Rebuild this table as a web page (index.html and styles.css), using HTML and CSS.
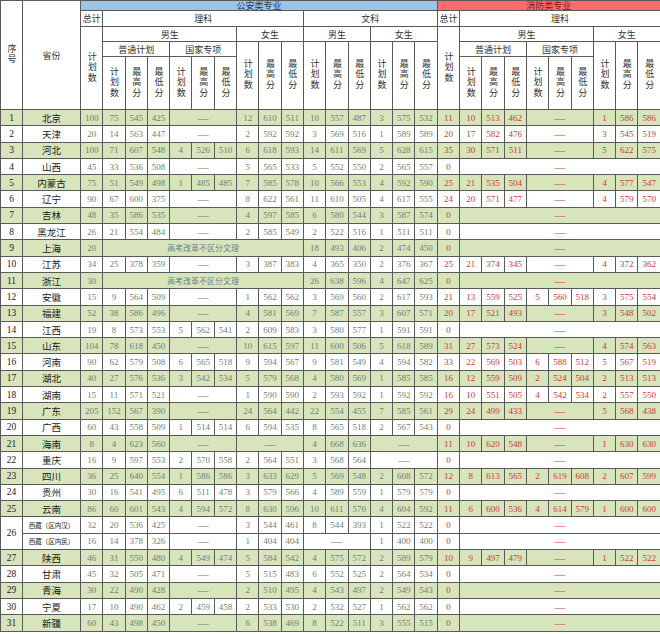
FILE: index.html
```html
<!DOCTYPE html>
<html lang="zh">
<head>
<meta charset="utf-8">
<title>招生计划</title>
<link rel="stylesheet" href="styles.css">
</head>
<body>
<table class="t">
<colgroup>
<col class="c-i"><col class="c-p">
<col class="c"><col class="c"><col class="c"><col class="c"><col class="c"><col class="c"><col class="c"><col class="c"><col class="c"><col class="c"><col class="c"><col class="c"><col class="c"><col class="c"><col class="c"><col class="c">
<col class="c"><col class="c"><col class="c"><col class="c"><col class="c"><col class="c"><col class="c"><col class="c"><col class="c"><col class="c">
</colgroup>
<thead>
<tr class="h1"><th rowspan="5"><span class="vt">序号</span></th><th rowspan="5">省份</th><th colspan="16" class="blue">公安类专业</th><th colspan="10" class="red">消防类专业</th></tr>
<tr class="h2"><th>总计</th><th colspan="9">理科</th><th colspan="6">文科</th><th>总计</th><th colspan="9">理科</th></tr>
<tr class="h3"><th rowspan="3"><span class="vt">计划数</span></th><th colspan="6">男生</th><th colspan="3">女生</th><th colspan="3">男生</th><th colspan="3">女生</th><th rowspan="3"><span class="vt">计划数</span></th><th colspan="6">男生</th><th colspan="3">女生</th></tr>
<tr class="h4"><th colspan="3">普通计划</th><th colspan="3">国家专项</th><th rowspan="2"><span class="vt">计划数</span></th><th rowspan="2"><span class="vt">最高分</span></th><th rowspan="2"><span class="vt">最低分</span></th><th rowspan="2"><span class="vt">计划数</span></th><th rowspan="2"><span class="vt">最高分</span></th><th rowspan="2"><span class="vt">最低分</span></th><th rowspan="2"><span class="vt">计划数</span></th><th rowspan="2"><span class="vt">最高分</span></th><th rowspan="2"><span class="vt">最低分</span></th><th colspan="3">普通计划</th><th colspan="3">国家专项</th><th rowspan="2"><span class="vt">计划数</span></th><th rowspan="2"><span class="vt">最高分</span></th><th rowspan="2"><span class="vt">最低分</span></th></tr>
<tr class="h5"><th><span class="vt">计划数</span></th><th><span class="vt">最高分</span></th><th><span class="vt">最低分</span></th><th><span class="vt">计划数</span></th><th><span class="vt">最高分</span></th><th><span class="vt">最低分</span></th><th><span class="vt">计划数</span></th><th><span class="vt">最高分</span></th><th><span class="vt">最低分</span></th><th><span class="vt">计划数</span></th><th><span class="vt">最高分</span></th><th><span class="vt">最低分</span></th></tr>
</thead>
<tbody>
<tr class="g"><td class="i">1</td><td class="p">北京</td><td>100</td><td>75</td><td>545</td><td>425</td><td colspan="3" class="d">——</td><td>12</td><td>610</td><td>511</td><td>10</td><td>557</td><td>487</td><td>3</td><td>575</td><td>532</td><td class="r">11</td><td class="r">10</td><td class="r">513</td><td class="r">462</td><td colspan="3" class="r d">——</td><td class="r">1</td><td class="r">586</td><td class="r">586</td></tr>
<tr><td class="i">2</td><td class="p">天津</td><td>20</td><td>14</td><td>563</td><td>447</td><td colspan="3" class="d">——</td><td>2</td><td>592</td><td>592</td><td>3</td><td>569</td><td>516</td><td>1</td><td>589</td><td>589</td><td class="r">20</td><td class="r">17</td><td class="r">582</td><td class="r">476</td><td colspan="3" class="r d">——</td><td class="r">3</td><td class="r">545</td><td class="r">519</td></tr>
<tr class="g"><td class="i">3</td><td class="p">河北</td><td>100</td><td>71</td><td>607</td><td>548</td><td>4</td><td>526</td><td>510</td><td>6</td><td>618</td><td>593</td><td>14</td><td>611</td><td>569</td><td>5</td><td>628</td><td>615</td><td class="r">35</td><td class="r">30</td><td class="r">571</td><td class="r">511</td><td colspan="3" class="r d">——</td><td class="r">5</td><td class="r">622</td><td class="r">575</td></tr>
<tr><td class="i">4</td><td class="p">山西</td><td>45</td><td>33</td><td>536</td><td>508</td><td colspan="3" class="d">——</td><td>5</td><td>565</td><td>533</td><td>5</td><td>552</td><td>550</td><td>2</td><td>565</td><td>557</td><td class="r">0</td><td colspan="9" class="r d">——</td></tr>
<tr class="g"><td class="i">5</td><td class="p">内蒙古</td><td>75</td><td>51</td><td>549</td><td>498</td><td>1</td><td>485</td><td>485</td><td>7</td><td>585</td><td>578</td><td>10</td><td>566</td><td>553</td><td>4</td><td>592</td><td>590</td><td class="r">25</td><td class="r">21</td><td class="r">535</td><td class="r">504</td><td colspan="3" class="r d">——</td><td class="r">4</td><td class="r">577</td><td class="r">547</td></tr>
<tr><td class="i">6</td><td class="p">辽宁</td><td>90</td><td>67</td><td>600</td><td>375</td><td colspan="3" class="d">——</td><td>8</td><td>622</td><td>561</td><td>11</td><td>610</td><td>505</td><td>4</td><td>617</td><td>555</td><td class="r">24</td><td class="r">20</td><td class="r">571</td><td class="r">477</td><td colspan="3" class="r d">——</td><td class="r">4</td><td class="r">579</td><td class="r">570</td></tr>
<tr class="g"><td class="i">7</td><td class="p">吉林</td><td>48</td><td>35</td><td>586</td><td>535</td><td colspan="3" class="d">——</td><td>4</td><td>597</td><td>585</td><td>6</td><td>580</td><td>544</td><td>3</td><td>587</td><td>574</td><td class="r">0</td><td colspan="9" class="r d">——</td></tr>
<tr><td class="i">8</td><td class="p">黑龙江</td><td>26</td><td>21</td><td>554</td><td>484</td><td colspan="3" class="d">——</td><td>2</td><td>585</td><td>549</td><td>2</td><td>522</td><td>516</td><td>1</td><td>511</td><td>511</td><td class="r">0</td><td colspan="9" class="r d">——</td></tr>
<tr class="g"><td class="i">9</td><td class="p">上海</td><td>20</td><td colspan="9" class="note">高考改革不区分文理</td><td>18</td><td>493</td><td>406</td><td>2</td><td>474</td><td>450</td><td class="r">0</td><td colspan="9" class="r d">——</td></tr>
<tr><td class="i">10</td><td class="p">江苏</td><td>34</td><td>25</td><td>378</td><td>359</td><td colspan="3" class="d">——</td><td>3</td><td>387</td><td>383</td><td>4</td><td>365</td><td>350</td><td>2</td><td>376</td><td>367</td><td class="r">25</td><td class="r">21</td><td class="r">374</td><td class="r">345</td><td colspan="3" class="r d">——</td><td class="r">4</td><td class="r">372</td><td class="r">362</td></tr>
<tr class="g"><td class="i">11</td><td class="p">浙江</td><td>30</td><td colspan="9" class="note">高考改革不区分文理</td><td>26</td><td>638</td><td>596</td><td>4</td><td>647</td><td>625</td><td class="r">0</td><td colspan="9" class="r d">——</td></tr>
<tr><td class="i">12</td><td class="p">安徽</td><td>15</td><td>9</td><td>564</td><td>509</td><td colspan="3" class="d">——</td><td>1</td><td>562</td><td>562</td><td>3</td><td>569</td><td>560</td><td>2</td><td>617</td><td>593</td><td class="r">21</td><td class="r">13</td><td class="r">559</td><td class="r">525</td><td class="r">5</td><td class="r">560</td><td class="r">518</td><td class="r">3</td><td class="r">575</td><td class="r">554</td></tr>
<tr class="g"><td class="i">13</td><td class="p">福建</td><td>52</td><td>38</td><td>586</td><td>496</td><td colspan="3" class="d">——</td><td>4</td><td>581</td><td>569</td><td>7</td><td>587</td><td>557</td><td>3</td><td>607</td><td>571</td><td class="r">20</td><td class="r">17</td><td class="r">521</td><td class="r">493</td><td colspan="3" class="r d">——</td><td class="r">3</td><td class="r">548</td><td class="r">502</td></tr>
<tr><td class="i">14</td><td class="p">江西</td><td>19</td><td>8</td><td>573</td><td>553</td><td>5</td><td>562</td><td>541</td><td>2</td><td>609</td><td>583</td><td>3</td><td>580</td><td>577</td><td>1</td><td>591</td><td>591</td><td class="r">0</td><td colspan="9" class="r d">——</td></tr>
<tr class="g"><td class="i">15</td><td class="p">山东</td><td>104</td><td>78</td><td>618</td><td>450</td><td colspan="3" class="d">——</td><td>10</td><td>615</td><td>597</td><td>11</td><td>600</td><td>506</td><td>5</td><td>618</td><td>589</td><td class="r">31</td><td class="r">27</td><td class="r">573</td><td class="r">524</td><td colspan="3" class="r d">——</td><td class="r">4</td><td class="r">574</td><td class="r">563</td></tr>
<tr><td class="i">16</td><td class="p">河南</td><td>90</td><td>62</td><td>579</td><td>508</td><td>6</td><td>565</td><td>518</td><td>9</td><td>594</td><td>567</td><td>9</td><td>581</td><td>549</td><td>4</td><td>594</td><td>582</td><td class="r">33</td><td class="r">22</td><td class="r">569</td><td class="r">503</td><td class="r">6</td><td class="r">588</td><td class="r">512</td><td class="r">5</td><td class="r">567</td><td class="r">519</td></tr>
<tr class="g"><td class="i">17</td><td class="p">湖北</td><td>40</td><td>27</td><td>576</td><td>536</td><td>3</td><td>542</td><td>534</td><td>5</td><td>579</td><td>568</td><td>4</td><td>580</td><td>569</td><td>1</td><td>585</td><td>585</td><td class="r">16</td><td class="r">12</td><td class="r">559</td><td class="r">509</td><td class="r">2</td><td class="r">524</td><td class="r">504</td><td class="r">2</td><td class="r">513</td><td class="r">513</td></tr>
<tr><td class="i">18</td><td class="p">湖南</td><td>15</td><td>11</td><td>571</td><td>521</td><td colspan="3" class="d">——</td><td>1</td><td>590</td><td>590</td><td>2</td><td>593</td><td>592</td><td>1</td><td>592</td><td>592</td><td class="r">16</td><td class="r">10</td><td class="r">551</td><td class="r">505</td><td class="r">4</td><td class="r">542</td><td class="r">534</td><td class="r">2</td><td class="r">557</td><td class="r">550</td></tr>
<tr class="g"><td class="i">19</td><td class="p">广东</td><td>205</td><td>152</td><td>567</td><td>390</td><td colspan="3" class="d">——</td><td>24</td><td>564</td><td>442</td><td>22</td><td>554</td><td>455</td><td>7</td><td>585</td><td>561</td><td class="r">29</td><td class="r">24</td><td class="r">499</td><td class="r">433</td><td colspan="3" class="r d">——</td><td class="r">5</td><td class="r">568</td><td class="r">438</td></tr>
<tr><td class="i">20</td><td class="p">广西</td><td>60</td><td>43</td><td>558</td><td>509</td><td>1</td><td>514</td><td>514</td><td>6</td><td>594</td><td>535</td><td>8</td><td>565</td><td>518</td><td>2</td><td>567</td><td>543</td><td class="r">0</td><td colspan="9" class="r d">——</td></tr>
<tr class="g"><td class="i">21</td><td class="p">海南</td><td>8</td><td>4</td><td>623</td><td>560</td><td colspan="3" class="d">——</td><td colspan="3" class="d">——</td><td>4</td><td>668</td><td>636</td><td colspan="3" class="d">——</td><td class="r">11</td><td class="r">10</td><td class="r">620</td><td class="r">548</td><td colspan="3" class="r d">——</td><td class="r">1</td><td class="r">630</td><td class="r">630</td></tr>
<tr><td class="i">22</td><td class="p">重庆</td><td>16</td><td>9</td><td>597</td><td>553</td><td>2</td><td>570</td><td>558</td><td>2</td><td>564</td><td>551</td><td>3</td><td>568</td><td>564</td><td colspan="3" class="d">——</td><td class="r">0</td><td colspan="9" class="r d">——</td></tr>
<tr class="g"><td class="i">23</td><td class="p">四川</td><td>36</td><td>25</td><td>640</td><td>554</td><td>1</td><td>586</td><td>586</td><td>3</td><td>633</td><td>629</td><td>5</td><td>569</td><td>548</td><td>2</td><td>608</td><td>572</td><td class="r">12</td><td class="r">8</td><td class="r">613</td><td class="r">565</td><td class="r">2</td><td class="r">619</td><td class="r">608</td><td class="r">2</td><td class="r">607</td><td class="r">599</td></tr>
<tr><td class="i">24</td><td class="p">贵州</td><td>30</td><td>16</td><td>541</td><td>495</td><td>6</td><td>511</td><td>478</td><td>3</td><td>579</td><td>566</td><td>4</td><td>589</td><td>559</td><td>1</td><td>579</td><td>579</td><td class="r">0</td><td colspan="9" class="r d">——</td></tr>
<tr class="g"><td class="i">25</td><td class="p">云南</td><td>86</td><td>60</td><td>601</td><td>543</td><td>4</td><td>594</td><td>572</td><td>8</td><td>630</td><td>596</td><td>10</td><td>611</td><td>570</td><td>4</td><td>604</td><td>592</td><td class="r">11</td><td class="r">6</td><td class="r">600</td><td class="r">536</td><td class="r">4</td><td class="r">614</td><td class="r">579</td><td class="r">1</td><td class="r">600</td><td class="r">600</td></tr>
<tr><td class="i" rowspan="2">26</td><td class="p s">西藏（区内汉）</td><td>32</td><td>20</td><td>536</td><td>425</td><td colspan="3" class="d">——</td><td>3</td><td>544</td><td>461</td><td>8</td><td>544</td><td>393</td><td>1</td><td>522</td><td>522</td><td class="r">0</td><td colspan="9" class="r d">——</td></tr>
<tr><td class="p s">西藏（区内民）</td><td>16</td><td>14</td><td>378</td><td>326</td><td colspan="3" class="d">——</td><td>1</td><td>404</td><td>404</td><td colspan="3" class="d">——</td><td>1</td><td>400</td><td>400</td><td class="r">0</td><td colspan="9" class="r d">——</td></tr>
<tr class="g"><td class="i">27</td><td class="p">陕西</td><td>46</td><td>31</td><td>550</td><td>480</td><td>4</td><td>549</td><td>474</td><td>5</td><td>584</td><td>542</td><td>4</td><td>575</td><td>572</td><td>2</td><td>589</td><td>579</td><td class="r">10</td><td class="r">9</td><td class="r">497</td><td class="r">479</td><td colspan="3" class="r d">——</td><td class="r">1</td><td class="r">522</td><td class="r">522</td></tr>
<tr><td class="i">28</td><td class="p">甘肃</td><td>45</td><td>32</td><td>505</td><td>471</td><td colspan="3" class="d">——</td><td>5</td><td>515</td><td>483</td><td>6</td><td>552</td><td>525</td><td>2</td><td>564</td><td>534</td><td class="r">0</td><td colspan="9" class="r d">——</td></tr>
<tr class="g"><td class="i">29</td><td class="p">青海</td><td>30</td><td>22</td><td>490</td><td>428</td><td colspan="3" class="d">——</td><td>2</td><td>510</td><td>495</td><td>4</td><td>543</td><td>497</td><td>2</td><td>549</td><td>543</td><td class="r">0</td><td colspan="9" class="r d">——</td></tr>
<tr><td class="i">30</td><td class="p">宁夏</td><td>17</td><td>10</td><td>490</td><td>462</td><td>2</td><td>459</td><td>458</td><td>2</td><td>533</td><td>530</td><td>2</td><td>532</td><td>527</td><td>1</td><td>562</td><td>562</td><td class="r">0</td><td colspan="9" class="r d">——</td></tr>
<tr class="g"><td class="i">31</td><td class="p">新疆</td><td>60</td><td>43</td><td>498</td><td>450</td><td colspan="3" class="d">——</td><td>6</td><td>538</td><td>469</td><td>8</td><td>522</td><td>511</td><td>3</td><td>555</td><td>515</td><td class="r">0</td><td colspan="9" class="r d">——</td></tr>
</tbody>
</table>
</body>
</html>
```
FILE: styles.css
```css
html, body {
  margin: 0;
  padding: 0;
  background: #ffffff;
}

.t {
  border-collapse: collapse;
  table-layout: fixed;
  width: 660px;
  font-family: "Liberation Serif", serif;
}

.c-i { width: 22px; }
.c-p { width: 58px; }
.c { width: 22.3px; }

.t th,
.t td {
  border: 1px solid #5a5a5a;
  padding: 0;
  text-align: center;
  vertical-align: middle;
  white-space: nowrap;
  overflow: hidden;
}

.t th {
  font-family: "Noto Sans CJK SC", sans-serif;
  font-weight: normal;
  font-size: 9px;
  line-height: 9px;
  color: #333333;
  background: #ffffff;
}

.vt {
  display: inline-block;
  writing-mode: vertical-rl;
  text-orientation: upright;
  letter-spacing: 1.5px;
  line-height: 10px;
}

.h1 { height: 10px; }
.h2 { height: 16px; }
.h3 { height: 15px; }
.h4 { height: 15px; }
.h5 { height: 53px; }

.t th.blue {
  background: #9dc3e6;
  color: #1f3b5a;
}

.t th.red {
  background: #ff6b6b;
  color: #7a1a1a;
}

.t tbody td {
  height: 15.3px;
  font-size: 9px;
  line-height: 10px;
  color: #6f8274;
  background: #ffffff;
}

.t tbody tr.g td {
  background: #d8e4bc;
}

.t td.i {
  color: #222222;
  font-size: 9.5px;
}

.t td.p {
  font-family: "Noto Sans CJK SC", sans-serif;
  font-size: 9.5px;
  color: #1a1a1a;
}

.t td.p.s {
  font-size: 6.5px;
}

.t td.r {
  color: #cc3b2e;
}

.t td.d {
  font-family: "Noto Sans CJK SC", sans-serif;
  font-size: 7px;
  color: #6f7a74;
}

.t td.r.d {
  color: #d0453a;
}

.t td.note {
  font-family: "Noto Sans CJK SC", sans-serif;
  font-size: 8px;
  color: #6b8585;
}
```
